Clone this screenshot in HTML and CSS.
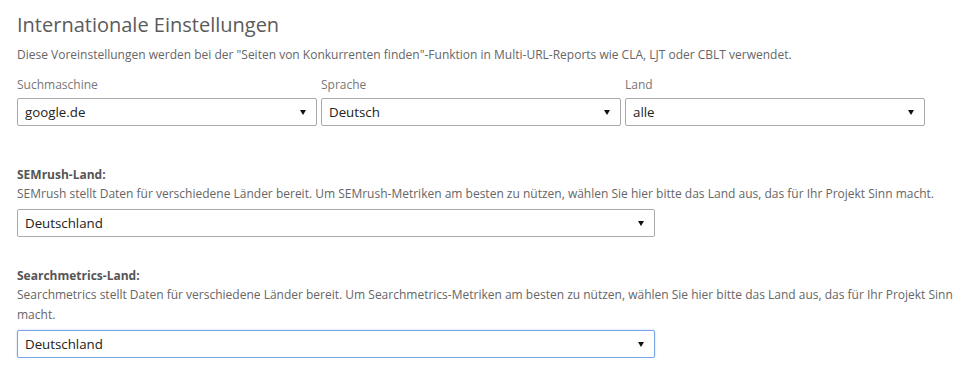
FILE: index.html
```html
<!DOCTYPE html>
<html lang="de">
<head>
<meta charset="utf-8">
<title>Internationale Einstellungen</title>
<link rel="stylesheet" href="styles.css">
</head>
<body>
<div class="page">
  <h1 class="title">Internationale Einstellungen</h1>
  <p class="desc intro">Diese Voreinstellungen werden bei der "Seiten von Konkurrenten finden"-Funktion in Multi-URL-Reports wie CLA, LJT oder CBLT verwendet.</p>
  <div class="grid3">
    <div class="field">
      <label class="label">Suchmaschine</label>
      <div class="select"><span class="value">google.de</span></div>
    </div>
    <div class="field">
      <label class="label">Sprache</label>
      <div class="select"><span class="value">Deutsch</span></div>
    </div>
    <div class="field">
      <label class="label">Land</label>
      <div class="select"><span class="value">alle</span></div>
    </div>
  </div>

  <div class="section first">
    <div class="heading">SEMrush-Land:</div>
    <p class="desc">SEMrush stellt Daten für verschiedene Länder bereit. Um SEMrush-Metriken am besten zu nützen, wählen Sie hier bitte das Land aus, das für Ihr Projekt Sinn macht.</p>
    <div class="select wide"><span class="value">Deutschland</span></div>
  </div>

  <div class="section second">
    <div class="heading">Searchmetrics-Land:</div>
    <p class="desc">Searchmetrics stellt Daten für verschiedene Länder bereit. Um Searchmetrics-Metriken am besten zu nützen, wählen Sie hier bitte das Land aus, das für Ihr Projekt Sinn macht.</p>
    <div class="select wide focus"><span class="value">Deutschland</span></div>
  </div>
</div>
</body>
</html>
```

FILE: styles.css
```css
html, body {
  margin: 0;
  padding: 0;
  background: #fff;
}
body {
  font-family: "Open Sans", "DejaVu Sans", sans-serif;
  color: #666;
}
.page {
  width: 940px;
  padding: 13px 0 0 17px;
}
.title {
  margin: 0;
  font-size: 20px;
  line-height: 24px;
  font-weight: 400;
  color: #5b5b5b;
}
.desc {
  margin: 0;
  font-size: 12px;
  line-height: 20px;
  color: #666;
}
.desc.intro {
  margin-top: 8px;
}
.grid3 {
  display: grid;
  grid-template-columns: 300px 300px 300px;
  column-gap: 4px;
  margin-top: 10px;
}
.field {
  display: flex;
  flex-direction: column;
}
.label {
  font-size: 12px;
  line-height: 20px;
  color: #777;
  margin-bottom: 3px;
}
.select {
  position: relative;
  box-sizing: border-box;
  height: 28px;
  border: 1px solid #aaa;
  border-radius: 2px;
  background: #fff;
  display: flex;
  align-items: center;
  padding-left: 7px;
}
.select::after {
  content: "";
  position: absolute;
  right: 10px;
  top: 11px;
  border-left: 3.5px solid transparent;
  border-right: 3.5px solid transparent;
  border-top: 5px solid #111;
}
.value {
  font-size: 13.3px;
  color: #222;
}
.section.first {
  margin-top: 39px;
}
.section.second {
  margin-top: 29px;
}
.heading {
  font-size: 12px;
  line-height: 19px;
  font-weight: 700;
  color: #555;
}
.wide {
  width: 638px;
  margin-top: 5px;
}
.focus {
  border-color: #7aa5e6;
  box-shadow: 0 0 2px rgba(100, 150, 230, 0.5);
}
```
